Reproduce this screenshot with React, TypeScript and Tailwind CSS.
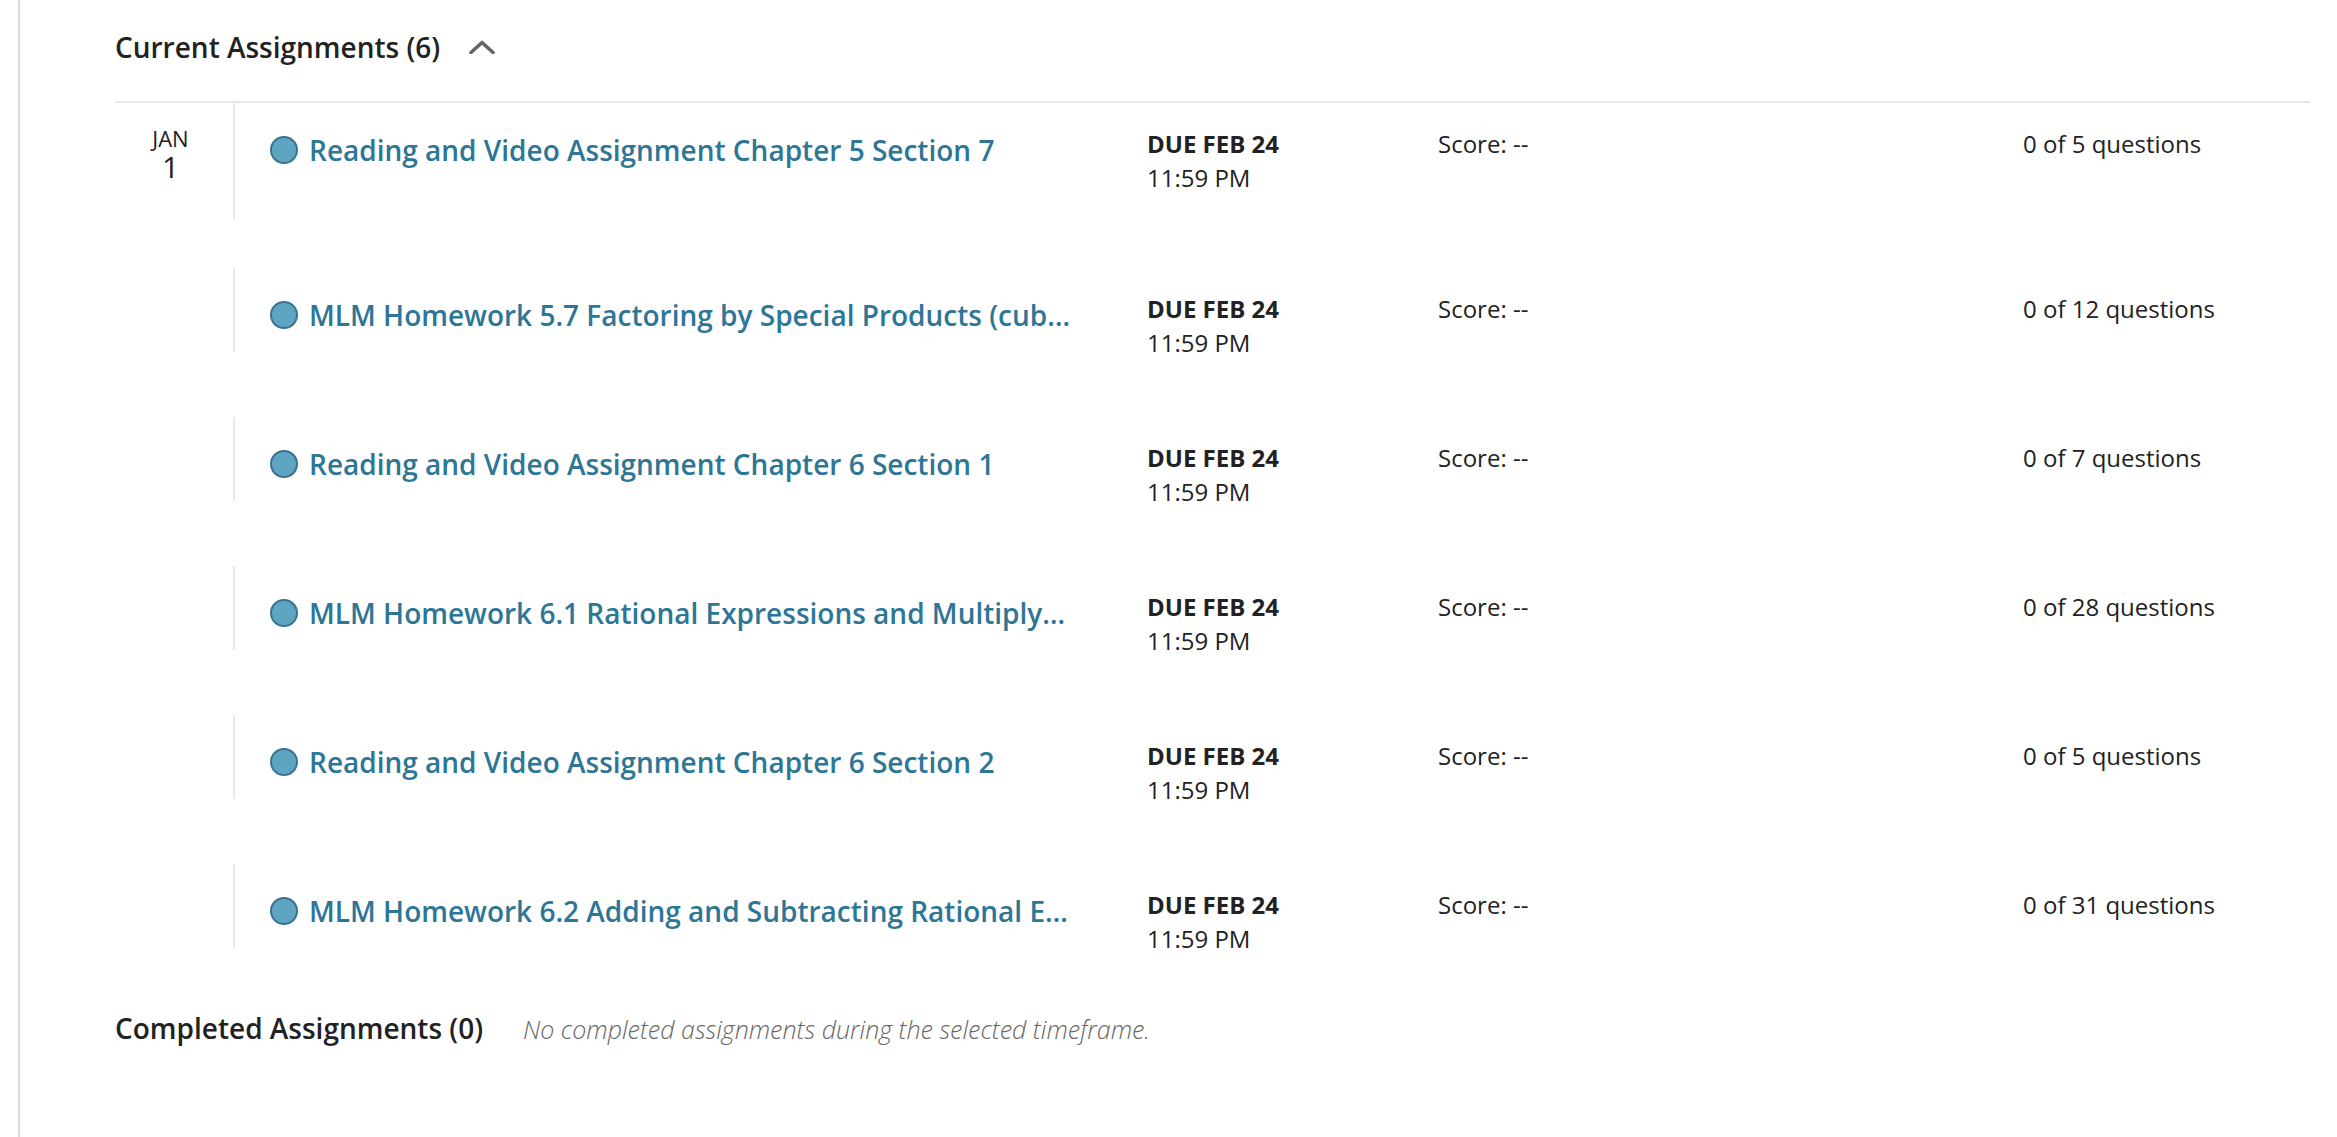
import React from "react";

type Assignment = {
  title: string;
  due: string;
  time: string;
  score: string;
  questions: string;
};

const assignments: Assignment[] = [
  { title: "Reading and Video Assignment Chapter 5 Section 7", due: "DUE FEB 24", time: "11:59 PM", score: "Score: --", questions: "0 of 5 questions" },
  { title: "MLM Homework 5.7 Factoring by Special Products (cubes and squares)", due: "DUE FEB 24", time: "11:59 PM", score: "Score: --", questions: "0 of 12 questions" },
  { title: "Reading and Video Assignment Chapter 6 Section 1", due: "DUE FEB 24", time: "11:59 PM", score: "Score: --", questions: "0 of 7 questions" },
  { title: "MLM Homework 6.1 Rational Expressions and Multiplying and Dividing", due: "DUE FEB 24", time: "11:59 PM", score: "Score: --", questions: "0 of 28 questions" },
  { title: "Reading and Video Assignment Chapter 6 Section 2", due: "DUE FEB 24", time: "11:59 PM", score: "Score: --", questions: "0 of 5 questions" },
  { title: "MLM Homework 6.2 Adding and Subtracting Rational Expressions", due: "DUE FEB 24", time: "11:59 PM", score: "Score: --", questions: "0 of 31 questions" },
];

function ChevronUp() {
  return (
    <svg width="26" height="14" viewBox="0 0 26 14" fill="none" aria-hidden>
      <path d="M2 12.5 L13 2.5 L24 12.5" stroke="#666666" strokeWidth="3.6" strokeLinecap="round" strokeLinejoin="round" />
    </svg>
  );
}

function AssignmentRow({ item, first }: { item: Assignment; first: boolean }) {
  return (
    <div className={`flex items-start ${first ? "mb-[49px]" : "mb-[65px] last:mb-0"}`}>
      {/* date column, only the first row of a day shows it */}
      <div className="w-[118px] shrink-0 pr-[7px] pt-[22px] text-center text-[#222]">
        {first && (
          <>
            <div className="text-[22px] leading-[26px]">JAN</div>
            <div className="text-[30px] leading-[32px]">1</div>
          </>
        )}
      </div>

      <div className={`flex border-l-2 border-[#e8e8e8] ${first ? "h-[116px]" : "h-[84px]"}`}>
        <div className="flex w-[912px] shrink-0 items-center gap-[11px] self-start pl-[35px] pr-[76px] pt-[28px]">
          <span className="h-[28px] w-[28px] shrink-0 rounded-full border-2 border-[#3a7391] bg-[#5ea5c1]" />
          <a className="min-w-0 truncate text-[28px] font-semibold leading-[38px] text-[#2e7696]" href="#">
            {item.title}
          </a>
        </div>

        <div className="w-[291px] shrink-0 pt-[24px] text-[24px] leading-[34px] text-[#222]">
          <div className="font-bold">{item.due}</div>
          <div>{item.time}</div>
        </div>

        <div className="w-[585px] shrink-0 pt-[24px] text-[24px] leading-[34px] text-[#222]">{item.score}</div>

        <div className="shrink-0 pt-[24px] text-[24px] leading-[34px] text-[#222]">{item.questions}</div>
      </div>
    </div>
  );
}

export default function App() {
  return (
    <div className="flex min-h-screen bg-white font-['Open_Sans',sans-serif]">
      <div className="w-[18px] shrink-0" />
      <main className="flex-1 border-l-2 border-[#dddddd] pl-[95px] pr-[27px] pt-[28px]">
        <section>
          <div className="flex items-center gap-[29px] pb-[35px]">
            <h2 className="text-[28px] font-semibold leading-[38px] text-[#222]">Current Assignments (6)</h2>
            <ChevronUp />
          </div>

          <div className="flex flex-col border-t-2 border-[#e6e6e6]">
            {assignments.map((a, i) => (
              <AssignmentRow key={a.title} item={a} first={i === 0} />
            ))}
          </div>
        </section>

        <section className="mt-[61px] flex items-baseline gap-[40px]">
          <h2 className="text-[28px] font-semibold leading-[38px] text-[#222]">Completed Assignments (0)</h2>
          <p className="text-[25px] font-light italic text-[#666]">No completed assignments during the selected timeframe.</p>
        </section>
      </main>
    </div>
  );
}
